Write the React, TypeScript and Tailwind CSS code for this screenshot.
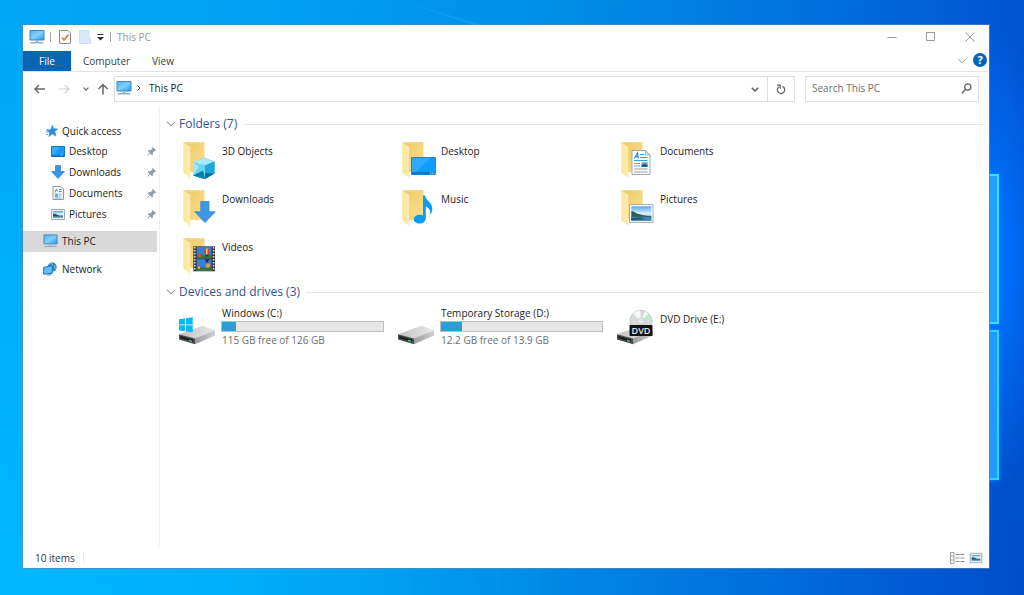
import type { ReactNode } from "react";

const fontStack = "font-['Open_Sans','Noto_Sans',sans-serif]";

function Chevron({ className }: { className: string }) {
  return (
    <svg viewBox="0 0 10 6" className={className} fill="none" stroke="currentColor" aria-hidden="true">
      <path d="M1 .8 5 4.8 9 .8" />
    </svg>
  );
}

function MonitorIcon({ className }: { className: string }) {
  return (
    <svg viewBox="0 0 16 14" className={className} aria-hidden="true">
      <defs>
        <linearGradient id="screen" x1="0" y1="0" x2="1" y2="1">
          <stop offset="0" stopColor="#4db4f4" />
          <stop offset="0.5" stopColor="#7fd0fb" />
          <stop offset="1" stopColor="#1f97ee" />
        </linearGradient>
      </defs>
      <path d="M1 .5h14v9.500H1z" fill="url(#screen)" stroke="#3d87bd" />
      <path d="M6.500 10.500h3v1.500h-3z" fill="#9fb9cc" />
      <path d="M1.500 12h13v1.500h-13z" fill="#8fb3cd" />
    </svg>
  );
}

function StarIcon() {
  return (
    <svg viewBox="0 0 13 12" className="h-3 w-[13px]" aria-hidden="true">
      <path d="m7.300.5 1.400 3.200 3.900.2-2.800 2.700 1.100 4.500-3.600-2-3.500 2.400 1-3.900L1.500 5.500l4.200-.9z" fill="#2b90dc" stroke="#2b90dc" strokeWidth=".6" />
      <path d="M1.500 4.500h2M.5 7h3M1 9.500h2" stroke="#6db7ea" />
    </svg>
  );
}

function DesktopIcon() {
  return (
    <svg viewBox="0 0 14 11" className="h-[11px] w-3.5" aria-hidden="true">
      <path d="M.5.5h13v10H.5z" fill="#169bfa" stroke="#1775bd" />
      <path d="M1 1h8L3 8H1z" fill="#37adff" />
      <path d="M1 9h12v1H1z" fill="#0d78cc" />
      <path d="M10 9h2" stroke="#cfeaff" strokeDasharray="1 1" />
    </svg>
  );
}

function ArrowIcon() {
  return (
    <svg viewBox="0 0 14 14" className="size-3.5" aria-hidden="true">
      <path d="M4.500.5h5v6h4L7 13.500.5 6.500h4z" fill="#3a95e4" stroke="#2c7fce" strokeWidth=".7" />
    </svg>
  );
}

function DocumentIcon() {
  return (
    <svg viewBox="0 0 14 14" className="size-3.5" aria-hidden="true">
      <path d="M2 .5h8l2.500 2.500v10.500H2z" fill="#fafafa" stroke="#93989e" />
      <path d="M4 6.500 5.500 3l1 2.500M8 3.500h2.500M8 5.500h2.500" stroke="#2b8fdc" fill="none" />
      <path d="M3.800 7.500h3.400v3.800H3.800z" fill="#69aee3" />
      <path d="M8 8h2.500M8 10h2.500M4 12h6.500" stroke="#79aed6" />
    </svg>
  );
}

function PictureIcon({ className }: { className: string }) {
  return (
    <svg viewBox="0 0 14 11" className={className} aria-hidden="true">
      <path d="M.5.5h13v10H.5z" fill="#f7f7f7" stroke="#a2a8ae" />
      <path d="M2 2h10v7H2z" fill="#d2ebfc" />
      <path d="M2 2h10v1.500H2z" fill="#59a9e6" />
      <path d="M2 4.500 5 5l3 1.500h4V8H2z" fill="#2b5263" />
      <path d="M2 7.500h10V9H2z" fill="#6ea9cf" />
    </svg>
  );
}

function NetworkIcon() {
  return (
    <svg viewBox="0 0 14 14" className="size-3.5" aria-hidden="true">
      <circle cx="9.200" cy="5" r="4.500" fill="#2b80bd" />
      <path d="M6.500 2.500C8 .8 10 2 9.500 3.500M12.500 3c-1.500 1-1.500 3 .3 3.500" stroke="#8fd0f2" fill="none" />
      <path d="m.7 5.300 8.600-1.500v7.400l-8.600 1z" fill="#63bdf7" stroke="#1f79b8" />
      <path d="m3 12.700 5.300-.6v1.200l-3.800.5z" fill="#6f9dbd" />
    </svg>
  );
}

function PinIcon() {
  return (
    <svg viewBox="0 0 10 10" className="size-[10px]" aria-hidden="true">
      <path d="m5.500.7 3.800 3.800-.9.600-.7-.3-1.900 1.900.1 2.200-.8.400L.8 5l.5-.8 2.200.1 2-1.900-.3-.8z" fill="#8f9ba6" />
      <path d="M3.200 6.800.6 9.400" stroke="#8f9ba6" />
    </svg>
  );
}

function FolderArt({ children }: { children: ReactNode }) {
  return (
    <svg viewBox="0 0 40 40" className="size-10 shrink-0" aria-hidden="true">
      <defs>
        <linearGradient id="folderBack" x1="0" y1="0" x2="1" y2="1">
          <stop offset="0" stopColor="#eecb68" />
          <stop offset="1" stopColor="#fbdf8d" />
        </linearGradient>
        <linearGradient id="folderFlap" x1="0" y1="0" x2="1" y2="0">
          <stop offset="0" stopColor="#fde495" />
          <stop offset="1" stopColor="#ffedb8" />
        </linearGradient>
        <linearGradient id="sky" x1="0" y1="0" x2="0" y2="1">
          <stop offset="0" stopColor="#55a9ee" />
          <stop offset="0.500" stopColor="#d9effc" />
          <stop offset="1" stopColor="#4b93bf" />
        </linearGradient>
      </defs>
      <path d="M6 2.300h20.500V32H11z" fill="url(#folderBack)" />
      <path d="m5.300 2.300 6.500 4.500c.7.500.8 1 .8 1.800v28.200l-1.200.8-6.100-5.200z" fill="url(#folderFlap)" />
      <path d="M12.600 8v24" stroke="#e9c86d" strokeWidth=".5" />
      {children}
    </svg>
  );
}

const cube = (
  <>
    <path d="m25.500 17.500 11 4v12L26 39.300l-11-3.800V23z" fill="#27b4dd" />
    <path d="m25.500 17.500 11 4L27 25.500 15 22.500z" fill="#a5e9f9" />
    <path d="M15 22.500 27 25.500V39l-12-3.500z" fill="#6bd7f2" />
    <path d="m27 25.500 9.500-4v12L27 39z" fill="#1ba9da" />
    <path d="m15 35.500 10-5 2 8.500z" fill="#087da4" />
    <path d="m27 33 9.500.5L27 39z" fill="#0a6f99" />
    <path d="m15 22.500 6 4-6 9z" fill="#b9effb" opacity=".7" />
  </>
);

const desktop = (
  <>
    <path d="M14.500 17.500h24v17h-24z" fill="#119bfb" stroke="#1273b8" strokeWidth=".8" />
    <path d="M15 18h19L19 32h-4z" fill="#2da9ff" />
    <path d="M15 32.300h23v1.800H15z" fill="#0876c7" />
    <path d="M33 33.200h4.500" stroke="#c7e7ff" strokeDasharray="1 .8" />
  </>
);

const documentSheet = (
  <>
    <path d="M16 10.500h13.500l4.500 4.500v19.500H16z" fill="#fcfcfc" stroke="#8d9297" strokeWidth=".8" />
    <path d="M29.500 10.500V15H34z" fill="#dfe3e6" stroke="#8d9297" strokeWidth=".6" />
    <path d="m18.300 18.500 3.200-5.500.8 5.500M19.500 16.600h2.800" stroke="#258fdb" strokeWidth="1.200" fill="none" />
    <path d="M24 14.500h4M24 17.500h7.500M18 20.500h13.500" stroke="#349be5" strokeWidth="1.200" />
    <path d="M18 23.500h6M18 26h6M18 29h13.500M18 32h13.500" stroke="#9a9fa4" />
    <path d="M25.500 22.300h6.200v4.500h-6.200z" fill="#579ed7" />
    <path d="m25.500 25.500 3-1.500 3.200 1.800v1h-6.200z" fill="#264a61" />
  </>
);

const downArrow = (
  <path d="M22.700 13.500H31v10.200h6.300L27 34.600 16.700 23.700h6z" fill="#3c98e6" stroke="#2b83d3" strokeWidth=".7" />
);

const note = (
  <path
    d="M26 7.500h2c.6 5 7.500 6.800 7.300 13.500 0 2.300-.7 4.300-2 6 .9-5-1.800-7.300-4.500-8.500v11.700c0 3-2.700 5.300-6.300 5.300-3.300 0-5.700-1.500-5.700-4.200 0-3 3.500-5 7.200-4.500.8.100 1.500.3 2 .6z"
    fill="#099bf5"
  />
);

const photo = (
  <>
    <path d="M13.500 16.500H37v18H13.500z" fill="#fafafa" stroke="#989ea3" strokeWidth=".8" />
    <path d="M15.300 18.300h20v14.500h-20z" fill="url(#sky)" />
    <path d="M15.300 23c3 .2 4.200 2.200 6.500 2.800 3.700 1 7.500 2 13.500 2.200v1.200h-20z" fill="#2c5f51" />
    <path d="M15.300 28.800h20v4h-20z" fill="#3d86ad" />
    <path d="m15.300 30 9-.4 5 1.600-14 .8z" fill="#28556b" />
  </>
);

const film = (
  <>
    <path d="M15.300 10.300H37v25H15.300z" fill="#3b3b3b" />
    <path d="M16.800 11v24M35.600 11v24" stroke="#e7e7e7" strokeWidth="1.400" strokeDasharray="1.500 1.500" />
    <path d="M18.800 11h14.700v11.200H18.800zM18.800 23.300h14.700v11.400H18.800z" fill="#397fda" />
    <path d="M18.800 18.500h5l3 1.700 3-1.700h3.700v3.700H18.800zM18.800 31.500l5-.8 4 1.500 5.700-2v4.500H18.800z" fill="#3b713c" />
    <circle cx="28.800" cy="15.300" r="2.900" fill="#d3443e" />
    <path d="M28 12.500h1.600v5.700H28z" fill="#f5cf4e" />
    <path d="M27.300 18.700h3v1.700h-3z" fill="#4b2c26" />
    <path d="m26.500 23.300 2.500 4 2.500-4z" fill="#242b3b" />
    <circle cx="30" cy="29.500" r="2.200" fill="#e29642" />
    <circle cx="21.500" cy="19.500" r="1.700" fill="#cf524a" />
    <circle cx="21" cy="31.800" r="1.200" fill="#e7b84f" />
  </>
);

function DriveArt({ children }: { children?: ReactNode }) {
  return (
    <svg viewBox="0 0 40 40" className="size-10 shrink-0" aria-hidden="true">
      <defs>
        <linearGradient id="driveTop" x1="0" y1="0" x2="1" y2="0">
          <stop offset="0" stopColor="#c0c0c2" />
          <stop offset="1" stopColor="#e9e9ea" />
        </linearGradient>
        <linearGradient id="driveSide" x1="0" y1="0" x2="1" y2="0">
          <stop offset="0" stopColor="#9a9b9e" />
          <stop offset="1" stopColor="#cfd0d2" />
        </linearGradient>
      </defs>
      <path d="M1 28.300 23.500 20c.6-.2 1-.2 1.600 0L37 24.300 17 32.800z" fill="url(#driveTop)" />
      <path d="m17 32.600 20-8.300v5.200l-20 8.700z" fill="url(#driveSide)" />
      <path d="m1 28.300 16 4.300v5.600L1 33.500z" fill="#4a4b4d" />
      <path d="m2.500 30 12.500 3.400v2.400L2.500 32.300z" fill="#1c1d1e" />
      <path d="m11 33.700 3 .8v1.400l-3-.8z" fill="#34cf69" />
      {children}
    </svg>
  );
}

const windowsLogo = (
  <path d="m1 13.300 5.900-.9v6H1zm6.800-1 6.900-1v7.100H7.800zM1 19.300h5.900v6L1 24.400zm6.800 0h6.900v7l-6.900-.9z" fill="#0fb5f2" />
);

const dvd = (
  <>
    <circle cx="25" cy="15.500" r="11.200" fill="#d9dcdd" stroke="#afb3b5" strokeWidth=".6" />
    <path d="M25 15.500 17 7.700a11 11 0 0 1 7-3.300z" fill="#f6f7f7" />
    <path d="m25 15.500 8.500-7a11 11 0 0 1 2.500 5z" fill="#b9e7cc" />
    <path d="M25 15.500 29 5.200a11 11 0 0 1 3.500 2.300z" fill="#f2f3f3" />
    <circle cx="25" cy="15.500" r="3.300" fill="#eef0f0" stroke="#b5babc" strokeWidth=".7" />
    <circle cx="25" cy="15.500" r="1.300" fill="#fff" stroke="#b5babc" strokeWidth=".5" />
    <rect x="13.500" y="19" width="23" height="11" rx="1" fill="#131313" />
    <text x="25" y="27.700" textAnchor="middle" fontSize="9" fontWeight="600" fill="#e8e8e8">
      DVD
    </text>
  </>
);

const quickLinks = [
  { name: "Desktop", icon: <DesktopIcon /> },
  { name: "Downloads", icon: <ArrowIcon /> },
  { name: "Documents", icon: <DocumentIcon /> },
  { name: "Pictures", icon: <PictureIcon className="h-[11px] w-3.5" /> },
];

const folders = [
  { name: "3D Objects", art: cube },
  { name: "Desktop", art: desktop },
  { name: "Documents", art: documentSheet },
  { name: "Downloads", art: downArrow },
  { name: "Music", art: note },
  { name: "Pictures", art: photo },
  { name: "Videos", art: film },
];

const drives = [
  { name: "Windows (C:)", art: windowsLogo, free: "115 GB free of 126 GB", used: 9 },
  { name: "Temporary Storage (D:)", art: null, free: "12.2 GB free of 13.9 GB", used: 13 },
];

function SectionHeading({ children }: { children: ReactNode }) {
  return (
    <h2 className="flex h-5 items-center text-[12px] leading-5 text-[#35509c]">
      <button type="button" className="flex items-center gap-[3px] whitespace-nowrap">
        <Chevron className="h-1.5 w-2.5 text-[#777]" />
        {children}
      </button>
      <span className="ml-1.5 h-px flex-1 bg-[#e6e6e6]" />
    </h2>
  );
}

function Wallpaper() {
  return (
    <div className="absolute inset-0 -z-10 overflow-hidden bg-[linear-gradient(96deg,#00a8f8_0%,#00a0f5_25%,#008ae8_55%,#006cdc_78%,#0054d0_94%,#004dc8_100%)]">
      <div className="absolute inset-0 bg-[linear-gradient(0deg,#00b8ff_0%,#00b2fd_30%,transparent_90%)] [mask-image:linear-gradient(90deg,#000,transparent_55%)]" />
      <div className="absolute top-[20px] -right-10 h-[480px] w-[170px] bg-[radial-gradient(closest-side,#0074ff_0%,#006cf6_35%,transparent_100%)]" />
      <svg viewBox="0 0 100 30" className="absolute top-0 left-[39%] h-[30px] w-[100px]" aria-hidden="true">
        <path d="M0 0 100 30H88z" fill="#16a5ff" opacity=".5" />
      </svg>
      <div className="absolute top-[174px] right-[25px] h-[150px] w-10 border-2 border-[#3fdcff] bg-[#229fff] shadow-[0_0_5px_#0a8cff]" />
      <div className="absolute top-[330px] right-[25px] h-[150px] w-10 border-2 border-[#2fd2ff] bg-[#229aff] shadow-[0_0_5px_#0a8cff]" />
    </div>
  );
}

export default function App() {
  return (
    <div className={`relative isolate flex min-h-screen pt-[25px] pr-[35px] pb-[27px] pl-[23px] text-[10px] leading-3 text-[#1b1b1b] ${fontStack}`}>
      <Wallpaper />
      <div className="flex min-w-0 flex-1 flex-col bg-white shadow-[0_0_0_1px_#5a87b0a0]">
        <header>
          <div className="flex h-[26px] items-center pb-0.5 pl-1.5">
            <MonitorIcon className="h-3.5 w-4" />
            <span className="ml-[5px] h-[10px] w-px bg-[#a5a5a5]" />
            <button type="button" aria-label="Properties" className="ml-2">
              <svg viewBox="0 0 12 14" className="h-3.5 w-3" aria-hidden="true">
                <path d="M.5.500h8.500l2.500 2.500v10.500H.5z" fill="#fbfbfb" stroke="#8d8d8d" />
                <path d="m3 7.500 2 2.500 4.500-5.500" stroke="#db802e" strokeWidth="1.600" fill="none" />
              </svg>
            </button>
            <button type="button" aria-label="New folder" className="ml-2">
              <svg viewBox="0 0 12 14" className="h-3.5 w-3" aria-hidden="true">
                <path d="M.5.500h9.500v8h1.500v5H.5z" fill="#dce8f6" stroke="#cfdeee" />
              </svg>
            </button>
            <button type="button" aria-label="Customize toolbar" className="ml-1.5">
              <svg viewBox="0 0 7 7" className="size-[7px]" aria-hidden="true">
                <path d="M.5 0h6v1h-6zM0 3h7L3.500 6.500z" fill="#333" />
              </svg>
            </button>
            <span className="ml-1.5 h-[10px] w-px bg-[#a5a5a5]" />
            <h1 className="ml-1.5 flex-1 text-[#999]">This PC</h1>
            <div className="flex text-[#999]">
              <button type="button" aria-label="Minimize" className="flex h-6 w-[39px] items-center justify-center">
                <svg viewBox="0 0 10 10" className="size-[10px]" stroke="currentColor" aria-hidden="true"><path d="M.5 5.500h9" /></svg>
              </button>
              <button type="button" aria-label="Maximize" className="flex h-6 w-[39px] items-center justify-center">
                <svg viewBox="0 0 10 10" className="size-[10px]" fill="none" stroke="currentColor" aria-hidden="true"><path d="M.5.500h8v8h-8z" /></svg>
              </button>
              <button type="button" aria-label="Close" className="flex h-6 w-[39px] items-center justify-center">
                <svg viewBox="0 0 10 10" className="size-[10px]" stroke="currentColor" aria-hidden="true"><path d="m.5.500 9 9m0-9-9 9" /></svg>
              </button>
            </div>
          </div>

          <div className="flex h-[21px] items-stretch border-b border-[#e3e3e3]">
            <button type="button" className="w-12 bg-[#0665b4] text-white">File</button>
            <button type="button" className="px-3 text-[#3c3c3c]">Computer</button>
            <button type="button" className="px-[10px] text-[#3c3c3c]">View</button>
            <span className="flex-1" />
            <button type="button" aria-label="Expand ribbon" className="px-1.5">
              <Chevron className="h-1.5 w-2.5 text-[#999]" />
            </button>
            <button type="button" aria-label="Help" className="mr-0.5 mb-0.5 size-3.5 self-center rounded-full bg-[#0665b8] text-[11px] leading-3.5 font-bold text-white">?</button>
          </div>

          <div className="flex items-center px-[10px] py-1 text-[#666]">
            <button type="button" aria-label="Back" className="w-[13px]">
              <svg viewBox="0 0 13 10" className="h-[10px] w-[13px]" fill="none" stroke="currentColor" strokeWidth="1.400" aria-hidden="true"><path d="M12 5H2M6 1 2 5l4 4" /></svg>
            </button>
            <button type="button" aria-label="Forward" className="ml-3 w-[13px] text-[#d0d0d0]">
              <svg viewBox="0 0 13 10" className="h-[10px] w-[13px]" fill="none" stroke="currentColor" strokeWidth="1.200" aria-hidden="true"><path d="M1 5h10M7 1l4 4-4 4" /></svg>
            </button>
            <button type="button" aria-label="Recent locations" className="ml-3">
              <Chevron className="h-1 w-1.5 stroke-2" />
            </button>
            <button type="button" aria-label="Up" className="ml-2">
              <svg viewBox="0 0 12 12" className="size-3" fill="none" stroke="currentColor" strokeWidth="1.500" aria-hidden="true"><path d="M6 11.500V1.500M1.500 6 6 1.500 10.500 6" /></svg>
            </button>
            <div className="ml-[5px] flex h-[26px] flex-1 items-stretch border border-[#dedede]">
              <button type="button" className="flex flex-1 items-center pb-0.5 pl-px text-[#1b1b1b]">
                <MonitorIcon className="h-3.5 w-4" />
                <svg viewBox="0 0 4 6" className="ml-[5px] h-1.5 w-1" fill="none" stroke="#555" aria-hidden="true"><path d="m.5.500 2.500 2.500L.5 5.500" /></svg>
                <span className="ml-2">This PC</span>
              </button>
              <button type="button" aria-label="Previous locations" className="w-6">
                <Chevron className="mx-auto h-[5px] w-2 stroke-2" />
              </button>
              <button type="button" aria-label="Refresh" className="w-[27px] border-l border-[#dedede]">
                <svg viewBox="0 0 10 11" className="mx-auto h-[11px] w-[10px]" fill="none" stroke="currentColor" strokeWidth="1.300" aria-hidden="true">
                  <path d="M6.500 2.400A3.700 3.700 0 1 1 3 2.700M1 1.200h3.300v3.500" />
                </svg>
              </button>
            </div>
            <label className="ml-[10px] flex h-[26px] w-[174px] items-center border border-[#dedede] px-1.5 pb-0.5">
              <input type="search" aria-label="Search This PC" placeholder="Search This PC" className="min-w-0 flex-1 outline-none placeholder:text-[#6d6d6d]" />
              <svg viewBox="0 0 11 11" className="size-[11px]" fill="none" stroke="currentColor" strokeWidth="1.300" aria-hidden="true">
                <circle cx="6.800" cy="4" r="3.100" />
                <path d="M4.600 6.300.8 10.200" strokeWidth="1.600" />
              </svg>
            </label>
          </div>
        </header>

        <div className="flex flex-1">
          <nav aria-label="Locations" className="flex w-[137px] shrink-0 flex-col gap-1.5 border-r border-[#f1f1f1] pt-[14px] pr-0.5">
            <div>
              <a href="#quick-access" className="flex h-[21px] items-center gap-1 pl-[22px]">
                <StarIcon />
                Quick access
              </a>
              <ul>
                {quickLinks.map((link) => (
                  <li key={link.name}>
                    <a href={`#${link.name.toLowerCase()}`} className="flex h-[21px] items-center gap-1 pb-px pl-7">
                      {link.icon}
                      <span className="flex-1">{link.name}</span>
                      <PinIcon />
                    </a>
                  </li>
                ))}
              </ul>
            </div>
            <a href="#this-pc" aria-current="page" className="flex h-[21px] items-center gap-1 bg-[#d9d9d9] pb-px pl-5">
              <MonitorIcon className="h-3.5 w-[15px]" />
              This PC
            </a>
            <a href="#network" className="flex h-[21px] items-center gap-[5px] pl-5">
              <NetworkIcon />
              Network
            </a>
          </nav>

          <main className="min-w-0 flex-1 pt-2 pr-1.5 pl-1.5">
            <SectionHeading>Folders (7)</SectionHeading>
            <ul className="mt-1.5 grid grid-cols-[repeat(auto-fill,219px)] pl-3">
              {folders.map((folder) => (
                <li key={folder.name}>
                  <button type="button" className="flex h-12 items-start gap-1 text-left">
                    <FolderArt>{folder.art}</FolderArt>
                    <span className="pt-[5px]">{folder.name}</span>
                  </button>
                </li>
              ))}
            </ul>
            <div className="-mt-0.5">
              <SectionHeading>Devices and drives (3)</SectionHeading>
            </div>
            <ul className="mt-1 grid grid-cols-[repeat(auto-fill,219px)] pl-3">
              {drives.map((drive) => (
                <li key={drive.name}>
                  <button type="button" className="flex h-12 items-start gap-[3px] text-left">
                    <DriveArt>{drive.art}</DriveArt>
                    <span className="flex flex-col gap-0.5">
                      <span className="pt-px pl-px">{drive.name}</span>
                      <span className="block h-[11px] w-[163px] border border-[#bcbcbc] bg-[#e6e6e6]">
                        <span className="block h-full bg-[#26a0da]" style={{ width: `${drive.used}%` }} />
                      </span>
                      <span className="pl-px text-[#6d6d6d]">{drive.free}</span>
                    </span>
                  </button>
                </li>
              ))}
              <li>
                <button type="button" className="flex h-12 items-start gap-1 text-left">
                  <DriveArt>{dvd}</DriveArt>
                  <span className="pt-[7px]">DVD Drive (E:)</span>
                </button>
              </li>
            </ul>
          </main>
        </div>

        <footer className="flex h-[22px] items-center pt-0.5 pr-1.5 pl-3 text-[#26375c]">
          <span>10 items</span>
          <span className="ml-2 h-3 w-px bg-[#ececec]" />
          <span className="flex-1" />
          <button type="button" aria-label="Details view">
            <svg viewBox="0 0 15 12" className="h-3 w-[15px]" fill="none" aria-hidden="true">
              <path d="M.5.500h3.500v11H.5zM.5 4h3.500M.5 8h3.500" stroke="#a0a0a0" />
              <path d="M5.500 2.500h9M5.500 6h9M5.500 9.500h9" stroke="#8a8a8a" strokeDasharray="4 1" />
            </svg>
          </button>
          <button type="button" aria-label="Large icons view" className="ml-1 bg-[#ececec] p-px">
            <PictureIcon className="h-2.5 w-3" />
          </button>
        </footer>
      </div>
    </div>
  );
}
